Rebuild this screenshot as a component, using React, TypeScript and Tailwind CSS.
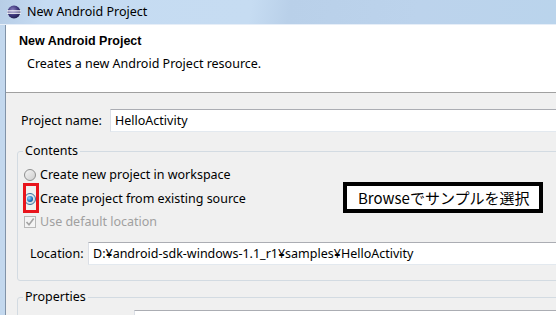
import React from "react";

function EclipseIcon() {
  return (
    <svg width="14" height="14" viewBox="0 0 14 14">
      <defs>
        <radialGradient id="eg" cx="40%" cy="35%" r="70%">
          <stop offset="0%" stopColor="#8a7fc0" />
          <stop offset="60%" stopColor="#3b3478" />
          <stop offset="100%" stopColor="#1f1a4a" />
        </radialGradient>
      </defs>
      <circle cx="7" cy="7" r="6.5" fill="url(#eg)" />
      <rect x="0" y="5.3" width="14" height="1.2" fill="#ffffff" />
      <rect x="0" y="7.6" width="14" height="1.2" fill="#ffffff" />
    </svg>
  );
}

function Radio({ checked }: { checked?: boolean }) {
  return (
    <div
      className={
        "w-[12px] h-[12px] rounded-full border flex items-center justify-center shrink-0 " +
        (checked
          ? "border-[#3a6f9a] bg-[linear-gradient(135deg,#e8eef4,#c9d7e3)]"
          : "border-[#8e8f8f] bg-[linear-gradient(135deg,#f4f4f4,#cfcfcf)]")
      }
    >
      {checked ? (
        <div className="w-[6px] h-[6px] rounded-full bg-[radial-gradient(circle_at_35%_35%,#8fd3ff,#1b6fb8_60%,#0b3d6b)]" />
      ) : null}
    </div>
  );
}

function DisabledCheck() {
  return (
    <div className="w-[12px] h-[12px] border border-[#b8b8b8] bg-[#f4f4f4] flex items-center justify-center shrink-0">
      <svg width="10" height="10" viewBox="0 0 10 10">
        <path d="M1.5 5 L4 7.8 L8.7 1.5" fill="none" stroke="#a4a4a4" strokeWidth="1.6" />
      </svg>
    </div>
  );
}

const inputCls =
  "h-[23px] bg-white border-t border-t-[#abadb3] border-l border-l-[#dbdfe6] border-r border-r-[#dbdfe6] border-b border-b-[#e3e9ef] flex items-center";

export default function App() {
  return (
    <div className="w-[556px] h-[315px] overflow-hidden relative bg-[#f0f0f0] text-[12.5px] leading-[16px] text-black font-['Noto_Sans',sans-serif]">
      {/* title bar */}
      <div className="h-[24px] flex items-center bg-[linear-gradient(100deg,#b7cde6_0%,#c5dbf2_8%,#c6dcf2_45%,#b9d0e9_52%,#bcd3ec_75%,#bad4ec_100%)]">
        <div className="ml-[7px] mr-[6px] flex items-center">
          <EclipseIcon />
        </div>
        <span className="text-[12.5px] text-black">New Android Project</span>
      </div>
      <div className="h-[1px] bg-[#e6eef8]" />
      <div className="flex">
        <div className="w-[5px] shrink-0 bg-[#c3d8ee]" />
        <div className="w-[1px] shrink-0 bg-[#8193a8]" />
        <div className="w-[620px] shrink-0">
          {/* header */}
          <div className="h-[67px] bg-white pt-[8px]">
            <div className="pl-[13px] font-['Liberation_Sans',sans-serif] font-bold text-[12.5px]">New Android Project</div>
            <div className="pl-[21px] mt-[7px]">Creates a new Android Project resource.</div>
          </div>
          <div className="h-[1px] bg-[#a0a0a0]" />
          {/* body */}
          <div className="pt-[16px]">
            <div className="flex items-center">
              <div className="pl-[15px] w-[104px] shrink-0">Project name:</div>
              <div className={inputCls + " flex-1 pl-[4px]"}>HelloActivity</div>
            </div>

            <fieldset className="mt-[11px] ml-[11px] mr-[20px] border border-[#d3dbe2] rounded-[3px] pb-[15px]">
              <legend className="ml-[5px] px-[2px]">Contents</legend>
              <div className="pl-[6px] h-[24px] mt-[4px] flex items-center gap-[4px]">
                <Radio />
                <span>Create new project in workspace</span>
              </div>
              <div className="pl-[6px] h-[24px] flex items-center gap-[4px]">
                <Radio checked />
                <span>Create project from existing source</span>
              </div>
              <div className="pl-[6px] h-[22px] flex items-center gap-[4px]">
                <DisabledCheck />
                <span className="text-[#a0a0a0]">Use default location</span>
              </div>
              <div className="mt-[9px] flex items-center">
                <div className="pl-[12px] w-[70px] shrink-0">Location:</div>
                <div className={inputCls + " flex-1 pl-[4px]"}>D:¥android-sdk-windows-1.1_r1¥samples¥HelloActivity</div>
              </div>
            </fieldset>

            <fieldset className="mt-[8px] ml-[11px] mr-[20px] border border-[#d3dbe2] rounded-[3px] h-[60px]">
              <legend className="ml-[5px] px-[2px]">Properties</legend>
              <div className="mt-[5px] ml-[116px] h-[20px] bg-white border-t border-t-[#abadb3] border-l border-l-[#dbdfe6]" />
            </fieldset>
          </div>
        </div>
      </div>

      {/* annotations */}
      <div className="absolute left-[23px] top-[183px] w-[16px] h-[30px] border-[3px] border-[#e8141c]" />
      <div className="absolute left-[343px] top-[182px] w-[200px] h-[31px] border-[4px] border-black bg-white flex items-center pl-[11px] whitespace-nowrap text-[15px] leading-[20px] font-['Noto_Sans_CJK_JP',sans-serif]">
        Browseでサンプルを選択
      </div>
    </div>
  );
}
